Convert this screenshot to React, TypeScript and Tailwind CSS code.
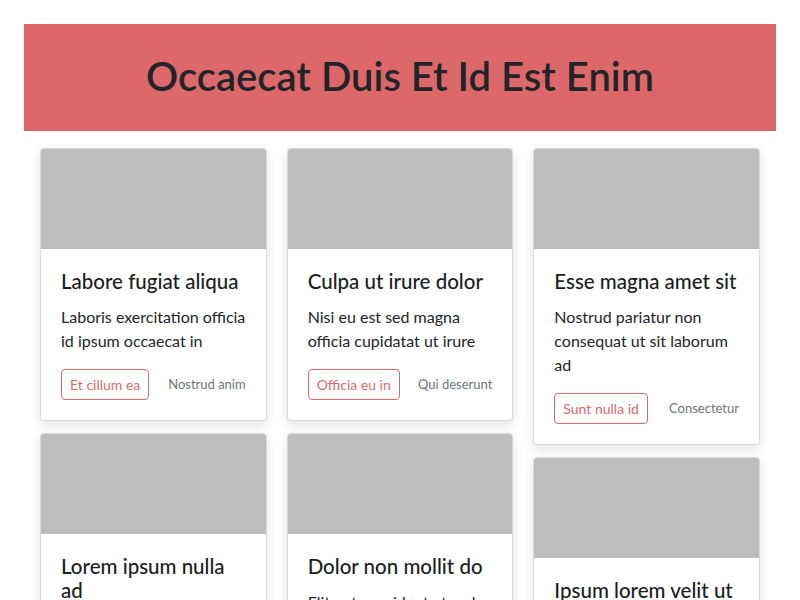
const font = { fontFamily: '"Lato", "Noto Sans", sans-serif' };

type Card = {
  title: string;
  text: string;
  button: string;
  note: string;
};

const columns: Card[][] = [
  [
    {
      title: "Labore fugiat aliqua",
      text: "Laboris exercitation officia id ipsum occaecat in",
      button: "Et cillum ea",
      note: "Nostrud anim",
    },
    {
      title: "Lorem ipsum nulla ad",
      text: "Amet veniam dolore elit nisi proident",
      button: "Aute esse",
      note: "Minim",
    },
  ],
  [
    {
      title: "Culpa ut irure dolor",
      text: "Nisi eu est sed magna officia cupidatat ut irure",
      button: "Officia eu in",
      note: "Qui deserunt",
    },
    {
      title: "Dolor non mollit do",
      text: "Elit aute proident et sed commodo",
      button: "Velit sint",
      note: "Labore",
    },
  ],
  [
    {
      title: "Esse magna amet sit",
      text: "Nostrud pariatur non consequat ut sit laborum ad",
      button: "Sunt nulla id",
      note: "Consectetur",
    },
    {
      title: "Ipsum lorem velit ut",
      text: "Ex dolor anim cillum sunt",
      button: "Duis aute",
      note: "Mollit",
    },
  ],
];

function CardItem({ card }: { card: Card }) {
  return (
    <div className="mb-3 overflow-hidden rounded border border-black/15 bg-white shadow-[0_4px_12px_rgba(0,0,0,0.12)]">
      <div className="h-[100px] bg-[#bdbdbd]"></div>
      <div className="p-5">
        <h5 className="mb-3 text-[20.5px] leading-6 font-medium text-[#1b1e21]">
          {card.title}
        </h5>
        <p className="mb-4 text-[16px] leading-6 text-[#212529]">{card.text}</p>
        <div className="flex items-center justify-between">
          <button className="rounded border border-[#dd686a] px-2 py-1 text-[14px] leading-[21px] text-[#dd686a]">
            {card.button}
          </button>
          <small className="text-[13px] text-[#6c757d]">{card.note}</small>
        </div>
      </div>
    </div>
  );
}

export default function App() {
  return (
    <div className="min-h-screen bg-white px-6 pt-6" style={font}>
      <header className="flex h-[107px] items-center justify-center bg-[#dd686a] pb-[3px]">
        <h1 className="text-[40px] font-semibold text-[#212529]">
          Occaecat Duis Et Id Est Enim
        </h1>
      </header>
      <main className="mt-[17px] flex gap-5 px-4">
        {columns.map((col, i) => (
          <div key={i} className="flex-1">
            {col.map((card) => (
              <CardItem key={card.title} card={card} />
            ))}
          </div>
        ))}
      </main>
    </div>
  );
}
